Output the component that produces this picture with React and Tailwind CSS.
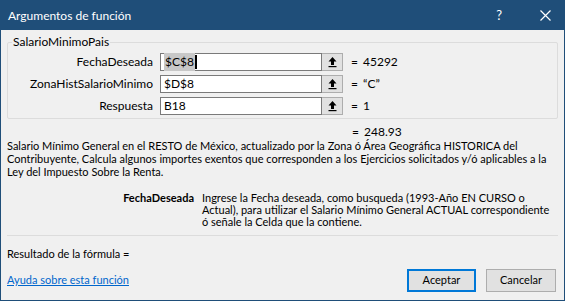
import { useState } from "react";

const args = [
  { name: "FechaDeseada", value: "$C$8", result: "45292", active: true },
  { name: "ZonaHistSalarioMinimo", value: "$D$8", result: "\u201cC\u201d" },
  { name: "Respuesta", value: "B18", result: "1" },
];

function RefButton() {
  return (
    <button className="w-[21px] h-full flex items-center justify-center bg-[#e1e1e1] border border-[#adadad] border-l-0">
      <svg width="11" height="12" viewBox="0 0 11 12">
        <path d="M5.5 1 L1.5 5.5 H4 V9 H7 V5.5 H9.5 Z" fill="#000" />
        <rect x="1.5" y="10" width="8" height="1.2" fill="#000" />
      </svg>
    </button>
  );
}

export default function App() {
  const [values, setValues] = useState(args.map((a) => a.value));

  return (
    <div className="w-[565px] h-[301px] flex flex-col bg-[#f0f0f0] border border-[#1f4e79] text-[11px] text-black font-['Lato',sans-serif] overflow-hidden">
      {/* title bar */}
      <div className="h-[29px] shrink-0 flex items-center bg-[#1f4e79] text-white">
        <span className="pl-[7px] text-[12px]">Argumentos de función</span>
        <span className="ml-auto mr-[38px] text-[13px]">?</span>
        <svg className="mr-[13px]" width="11" height="11" viewBox="0 0 11 11">
          <path d="M0.5 0.5 L10.5 10.5 M10.5 0.5 L0.5 10.5" stroke="#fff" strokeWidth="1.2" />
        </svg>
      </div>

      <div className="flex-1 flex flex-col px-[6px]">
        <fieldset className="mt-[4px] border border-[#dcdcdc] rounded-[2px] pl-0 pr-[8px] pt-[3px] pb-[3px] text-[12px]">
          <legend className="ml-[4px] px-[1px] leading-[16px]">SalarioMinimoPais</legend>
          <div className="flex flex-col gap-[4px]">
            {args.map((a, i) => (
              <div key={a.name} className="flex items-center h-[18px]">
                <span className="w-[152px] pr-[7px] text-right">{a.name}</span>
                <div className="flex h-[18px]">
                  <div className="w-[162px] h-full flex items-center bg-white border border-[#7a7a7a] px-[3px]">
                    <input
                      value={values[i]}
                      onChange={(e) => setValues(values.map((v, j) => (j === i ? e.target.value : v)))}
                      className={`w-full outline-none bg-transparent ${a.active ? "hidden" : ""}`}
                    />
                    {a.active && (
                      <span className="flex items-center">
                        <span className="bg-[#c8c8c8] px-[1px]">{values[i]}</span>
                        <span className="w-[2px] h-[14px] bg-black" />
                      </span>
                    )}
                  </div>
                  <RefButton />
                </div>
                <span className="ml-[8px] w-[12px]">=</span>
                <span>{a.result}</span>
              </div>
            ))}
          </div>
        </fieldset>

        <div className="h-[20px] flex items-end leading-[14px] pl-[345px] text-[12px]">
          <span className="w-[12px]">=</span>
          <span>248.93</span>
        </div>

        <p className="leading-[13px]">
          Salario Mínimo General en el RESTO de México, actualizado por la Zona ó Área Geográfica HISTORICA del
          <br />
          Contribuyente, Calcula algunos importes exentos que corresponden a los Ejercicios solicitados y/ó aplicables a la
          <br />
          Ley del Impuesto Sobre la Renta.
        </p>

        <div className="flex mt-[14px] leading-[12px]">
          <span className="w-[195px] pr-[8px] text-right font-bold">FechaDeseada</span>
          <p>
            Ingrese la Fecha deseada, como busqueda (1993-Año EN CURSO o
            <br />
            Actual), para utilizar el Salario Mínimo General ACTUAL correspondiente
            <br />
            ó señale la Celda que la contiene.
          </p>
        </div>

        <div className="mt-[7px] border-t border-[#dcdcdc]" />

        <div className="mt-[10px] leading-[16px]">Resultado de la fórmula =</div>

        <div className="flex items-center mt-[7px]">
          <a href="#" className="text-[#0066cc] underline">Ayuda sobre esta función</a>
          <button className="ml-auto w-[69px] h-[23px] bg-[#e1e1e1] border-2 border-[#0078d7]">Aceptar</button>
          <button className="ml-[10px] w-[70px] h-[23px] bg-[#e1e1e1] border border-[#adadad]">Cancelar</button>
          <span className="w-[2px]" />
        </div>
      </div>
    </div>
  );
}
